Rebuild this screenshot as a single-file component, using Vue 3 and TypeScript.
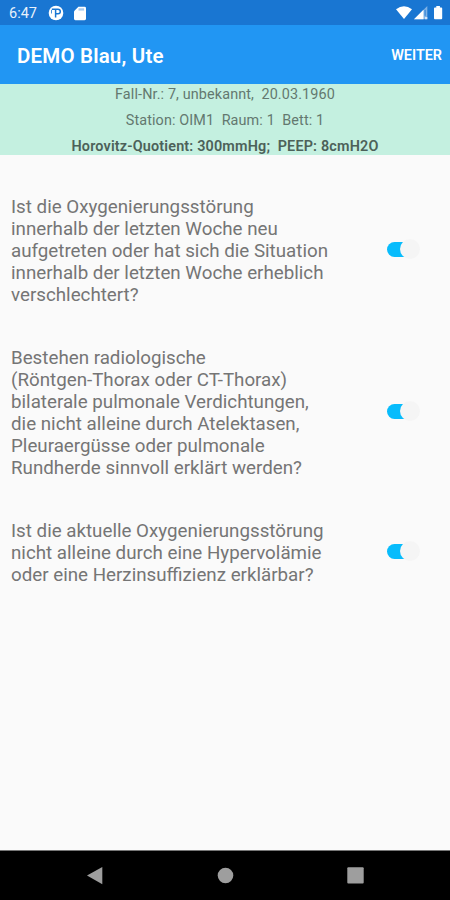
<script setup lang="ts">
import { ref } from 'vue'

interface Question {
  id: string
  lines: string[]
  value: boolean
}

const questions = ref<Question[]>([
  {
    id: 'onset',
    lines: [
      'Ist die Oxygenierungsstörung',
      'innerhalb der letzten Woche neu',
      'aufgetreten oder hat sich die Situation',
      'innerhalb der letzten Woche erheblich',
      'verschlechtert?',
    ],
    value: true,
  },
  {
    id: 'imaging',
    lines: [
      'Bestehen radiologische',
      '(Röntgen-Thorax oder CT-Thorax)',
      'bilaterale pulmonale Verdichtungen,',
      'die nicht alleine durch Atelektasen,',
      'Pleuraergüsse oder pulmonale',
      'Rundherde sinnvoll erklärt werden?',
    ],
    value: true,
  },
  {
    id: 'origin',
    lines: [
      'Ist die aktuelle Oxygenierungsstörung',
      'nicht alleine durch eine Hypervolämie',
      'oder eine Herzinsuffizienz erklärbar?',
    ],
    value: true,
  },
])
</script>

<template>
  <div class="screen">
    <div class="status">
      <span class="clock">6:47</span>
      <svg class="app-icon" width="16" height="16" viewBox="0 0 16 16">
        <circle cx="8" cy="8" r="7.300" fill="#fff" />
        <path d="M3.800 4.200H10a2.300 2.300 0 0 1 0 4.600H7.800M7.600 4.200v8.400" fill="none" stroke="#1976d2" stroke-width="1.500" />
        <path d="M3.500 5v3.500" fill="none" stroke="#1976d2" stroke-width=".8" />
      </svg>
      <svg class="sd-icon" width="12" height="15" viewBox="0 0 12 15">
        <path d="M4.400.800h6.200Q12 .800 12 2.200v10.600q0 1.400-1.400 1.400H1.400Q0 14.200 0 12.800V5.200z" fill="#fff" />
        <path d="M4.500 2.300h5.600v2.300H4.500z" fill="#a9cbee" />
      </svg>
      <span class="grow"></span>
      <svg width="48" height="16" viewBox="0 0 48 16">
        <path d="M0 4.200Q8 -1.800 16 4.200L8 14z" fill="#fff" />
        <path d="M31.300 1v13.200H18z" fill="#7fb2e6" />
        <path d="M27.500 4.800v9.400H18z" fill="#fff" />
        <path d="M28.500 4.800h1.300v6h-1.300z" fill="#3f8cd9" />
        <path d="M28.900 12h2.400v2.200h-2.400z" fill="#d5e5f7" />
        <path d="M40.300 1h3.600v1.500h1.400q.9 0 .9.900v9.900q0 .9-.9.900h-6.400q-.9 0-.9-.9V3.400q0-.9.900-.9h1.400z" fill="#fff" />
      </svg>
    </div>

    <header class="bar">
      <h1 class="title">DEMO Blau, Ute</h1>
      <button class="next" type="button">WEITER</button>
    </header>

    <section class="patient">
      <p class="case">Fall-Nr.: 7, unbekannt,&nbsp; 20.03.1960</p>
      <p class="ward">Station: OIM1&nbsp; Raum: 1&nbsp; Bett: 1</p>
      <p class="values">Horovitz-Quotient: 300mmHg;&nbsp; PEEP: 8cmH2O</p>
    </section>

    <main class="questions">
      <div v-for="q in questions" :key="q.id" class="question">
        <div class="text">
          <span v-for="line in q.lines" :key="line" class="line">{{ line }}</span>
        </div>
        <button
          class="switch"
          :class="{ on: q.value }"
          type="button"
          role="switch"
          :aria-checked="q.value"
          @click="q.value = !q.value"
        >
          <span class="thumb"></span>
        </button>
      </div>
    </main>

    <nav class="nav">
      <svg width="450" height="49" viewBox="0 0 450 49">
        <path d="M87 24.500 102.300 16v17.300z" fill="#9e9e9e" />
        <circle cx="225.500" cy="24.500" r="7.800" fill="#9e9e9e" />
        <rect x="347.300" y="16.200" width="16.400" height="16.400" rx="1" fill="#9e9e9e" />
      </svg>
    </nav>
  </div>
</template>

<style>
body {
  margin: 0;
  background: #fafafa;
}
</style>

<style scoped>
.screen {
  display: flex;
  flex-direction: column;
  width: 450px;
  height: 900px;
  overflow: hidden;
  background: #fafafa;
  font-family: Roboto, "Liberation Sans", sans-serif;
}
.status {
  display: flex;
  align-items: center;
  flex: none;
  box-sizing: border-box;
  height: 25px;
  padding: 1px 6px 0 9px;
  background: #1976d2;
}
.clock {
  width: 39px;
  color: #e8f1fb;
  font-size: 14.500px;
}
.sd-icon {
  margin-left: 10px;
}
.grow {
  flex: 1;
}
.bar {
  display: flex;
  align-items: center;
  justify-content: space-between;
  flex: none;
  box-sizing: border-box;
  height: 59px;
  padding: 2px 8px 0 17px;
  background: #2196f3;
  color: #fff;
}
.title {
  margin: 0;
  font-size: 20.500px;
  font-weight: 600;
  letter-spacing: 0.180px;
}
.next {
  padding: 0;
  border: 0;
  background: none;
  color: #fff;
  font: 600 14.400px Roboto, sans-serif;
}
.patient {
  flex: none;
  box-sizing: border-box;
  height: 71px;
  background: #c4f0e0;
  color: #63786f;
  text-align: center;
}
.patient p {
  margin: 0;
  height: 26px;
  font-size: 14.400px;
  line-height: 21px;
  letter-spacing: 0.120px;
  white-space: nowrap;
}
.patient .values {
  color: #4c6159;
  font-weight: 600;
  letter-spacing: 0.170px;
}
.questions {
  display: flex;
  flex: 1;
  flex-direction: column;
  gap: 41px;
  padding: 41px 33px 0 11px;
}
.question {
  display: flex;
  align-items: center;
  justify-content: space-between;
}
.line {
  display: block;
  color: #757575;
  font-size: 18.750px;
  line-height: 22px;
  white-space: nowrap;
}
.switch {
  display: flex;
  align-items: center;
  box-sizing: border-box;
  width: 30px;
  height: 15px;
  margin: 0 0 4px;
  padding: 0;
  border: 0;
  border-radius: 8px;
  background: #bdbdbd;
}
.switch.on {
  justify-content: flex-end;
  background: #08bcfc;
}
.thumb {
  flex: none;
  width: 20px;
  height: 20px;
  margin-right: -3px;
  border-radius: 50%;
  background: #f5f5f5;
}
.nav {
  flex: none;
  box-sizing: border-box;
  height: 50px;
  border-top: 1px solid #777;
  background: #000;
}
.nav svg {
  display: block;
}
</style>
